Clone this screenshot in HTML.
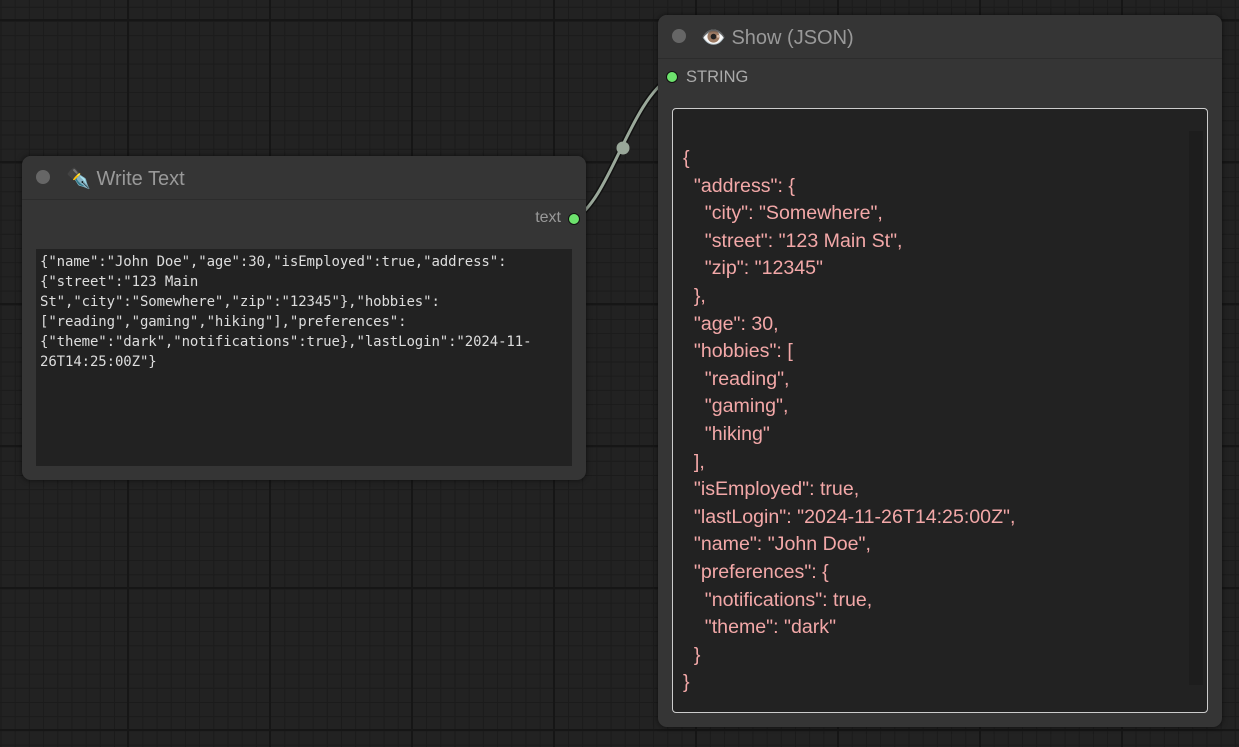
<!DOCTYPE html>
<html><head><style>
html,body{margin:0;padding:0}
body{width:1239px;height:747px;overflow:hidden;position:relative;background:#222;
background-image:
linear-gradient(90deg,#161616 2px,transparent 2px),
linear-gradient(0deg,#161616 2px,transparent 2px),
linear-gradient(90deg,#1b1b1b 1px,transparent 1px),
linear-gradient(0deg,#1b1b1b 1px,transparent 1px);
background-size:142px 142px,142px 142px,14.2px 14.2px,14.2px 14.2px;
background-position:127px 21px,127px 21px,0.5px 7.8px,0.5px 7.8px;
font-family:"Liberation Sans",Arial,sans-serif;}
.node{position:absolute;background:#353535;border-radius:9px;box-shadow:0 0 6px rgba(0,0,0,.6)}
.title{position:absolute;left:0;right:0;top:0;height:43px;border-bottom:1px solid #2c2c2c;border-radius:9px 9px 0 0;background:#353535}
.dot{position:absolute;width:14px;height:14px;border-radius:50%;background:#666}
.tt{position:absolute;color:#999;font-size:20px}
.g{position:absolute;width:10px;height:10px;border-radius:50%;background:#6de26d;border:1px solid #111}
</style></head><body>
<svg width="1239" height="747" style="position:absolute;left:0;top:0">
<path d="M574 219 C 610 200, 630 100, 671 77" stroke="#111" stroke-width="6" fill="none"/>
<path d="M574 219 C 610 200, 630 100, 671 77" stroke="#9aa89a" stroke-width="3" fill="none"/>
<circle cx="623" cy="148" r="6.5" fill="#9aa89a"/>
</svg>
<div class="node" style="left:22px;top:156px;width:564px;height:324px">
 <div class="title"></div>
 <div class="dot" style="left:14px;top:14px"></div>
 <div class="tt" style="left:44px;top:10px">✒️ Write Text</div>
 <div style="position:absolute;right:25px;top:53px;color:#999;font-size:16px">text</div>
 <div class="g" style="left:546px;top:57px"></div>
 <div style="position:absolute;left:14px;top:93px;width:528px;height:211px;background:#222;color:#ddd;font:14px/20px 'DejaVu Sans Mono',monospace;padding:3px 4px;white-space:pre;letter-spacing:-0.1px">{"name":"John Doe","age":30,"isEmployed":true,"address":
{"street":"123 Main
St","city":"Somewhere","zip":"12345"},"hobbies":
["reading","gaming","hiking"],"preferences":
{"theme":"dark","notifications":true},"lastLogin":"2024-11-
26T14:25:00Z"}</div>
</div>
<div class="node" style="left:658px;top:15px;width:564px;height:712px">
 <div class="title"></div>
 <div class="dot" style="left:14px;top:14px"></div>
 <div class="tt" style="left:43px;top:10px">👁️ Show (JSON)</div>
 <div class="g" style="left:8px;top:56px"></div>
 <div style="position:absolute;left:28px;top:53px;color:#aaa;font-size:16.5px">STRING</div>
 <div style="position:absolute;left:14px;top:93px;width:534px;height:603px;border:1px solid #ccc;border-radius:4px;background:#222;overflow:hidden">
  <div style="position:absolute;left:516px;top:22px;width:14px;height:554px;background:#1d1d1d"></div>
  <div style="position:absolute;left:10px;top:36px;color:#f3a8a8;font-size:19.6px;line-height:27.6px;white-space:pre">{
  "address": {
    "city": "Somewhere",
    "street": "123 Main St",
    "zip": "12345"
  },
  "age": 30,
  "hobbies": [
    "reading",
    "gaming",
    "hiking"
  ],
  "isEmployed": true,
  "lastLogin": "2024-11-26T14:25:00Z",
  "name": "John Doe",
  "preferences": {
    "notifications": true,
    "theme": "dark"
  }
}</div>
 </div>
</div>
</body></html>
